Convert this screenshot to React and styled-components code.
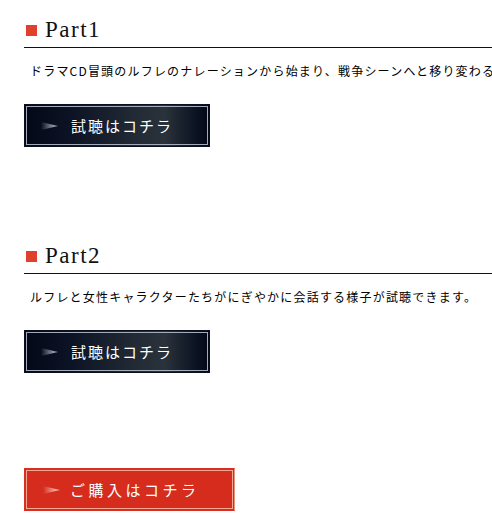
import React from 'react';
import styled, { createGlobalStyle } from 'styled-components';

const GlobalStyle = createGlobalStyle`
  html, body {
    margin: 0;
    padding: 0;
    background: #fff;
    overflow: hidden;
  }
  body {
    font-family: "Noto Sans CJK JP", "Liberation Sans", sans-serif;
    color: #000;
  }
`;

const sections = [
  {
    title: 'Part1',
    text: 'ドラマCD冒頭のルフレのナレーションから始まり、戦争シーンへと移り変わる様子が試聴できます。',
  },
  {
    title: 'Part2',
    text: 'ルフレと女性キャラクターたちがにぎやかに会話する様子が試聴できます。',
  },
];

const StyledPage = styled.div`
  padding: 18px 0 0 24px;
  width: 560px;
`;

const StyledSection = styled.section`
  margin-bottom: 97px;
`;

const StyledTitle = styled.h2`
  display: flex;
  align-items: center;
  gap: 8px;
  margin: 0;
  padding: 0 0 5px 2px;
  border-bottom: 1px solid #111;
  font-family: "Liberation Serif", "DejaVu Serif", serif;
  font-weight: normal;
  font-size: 23px;
  line-height: 24px;
  letter-spacing: 1.5px;
  color: #111;
  &::before {
    content: '';
    width: 11px;
    height: 11px;
    background: #e2402f;
  }
`;

const StyledText = styled.p`
  margin: 14px 0 0 6px;
  font-size: 12px;
  line-height: 18px;
  letter-spacing: 1.2px;
  white-space: nowrap;
  color: #000;
`;

const StyledButton = styled.a`
  display: block;
  box-sizing: border-box;
  width: ${({ $wide }) => ($wide ? 211 : 186)}px;
  height: 43px;
  margin-top: ${({ $top }) => $top}px;
  padding: 1px;
  background: ${({ $red }) =>
    $red
      ? '#d52c1e'
      : 'linear-gradient(90deg, #040818 0%, #0c1324 25%, #222a35 60%, #2a323b 76%, #0d1424 92%, #030716 100%)'};
  border: 1px solid ${({ $red }) => ($red ? '#d9301f' : '#0a1020')};
  border-right-color: ${({ $red }) => ($red ? '#ee9280' : '#0a1020')};
  text-decoration: none;
  cursor: pointer;
`;

const StyledButtonInner = styled.span`
  display: flex;
  align-items: center;
  box-sizing: border-box;
  height: 100%;
  padding-left: ${({ $red }) => ($red ? 16 : 14)}px;
  border: 1px solid ${({ $red }) => ($red ? '#f3a796' : '#a3abb8')};
  color: #fff;
  font-size: 15px;
  letter-spacing: ${({ $red }) => ($red ? 3.5 : 2)}px;
  font-weight: 400;
  svg {
    flex: none;
    margin-right: ${({ $red }) => ($red ? 10 : 13)}px;
  }
`;

const Arrow = ({ id, color }) => (
  <svg width="17" height="8" viewBox="0 0 17 8">
    <defs>
      <linearGradient id={id} x1="0" x2="1" y1="0" y2="0">
        <stop offset="0" stopColor={color} stopOpacity="0" />
        <stop offset="0.7" stopColor={color} stopOpacity="0.9" />
        <stop offset="1" stopColor={color} stopOpacity="1" />
      </linearGradient>
    </defs>
    <polygon points="0,0 17,4 0,8" fill={`url(#${id})`} />
  </svg>
);

const ListenButton = () => (
  <StyledButton $top={24}>
    <StyledButtonInner>
      <Arrow id="arrow-dark" color="#9aa3b2" />
      試聴はコチラ
    </StyledButtonInner>
  </StyledButton>
);

const App = () => (
  <StyledPage>
    <GlobalStyle />
    {sections.map(({ title, text }) => (
      <StyledSection key={title}>
        <StyledTitle>{title}</StyledTitle>
        <StyledText>{text}</StyledText>
        <ListenButton />
      </StyledSection>
    ))}
    <StyledButton $red $wide $top={-2}>
      <StyledButtonInner $red>
        <Arrow id="arrow-red" color="#f6b3a5" />
        ご購入はコチラ
      </StyledButtonInner>
    </StyledButton>
  </StyledPage>
);

export default App;
